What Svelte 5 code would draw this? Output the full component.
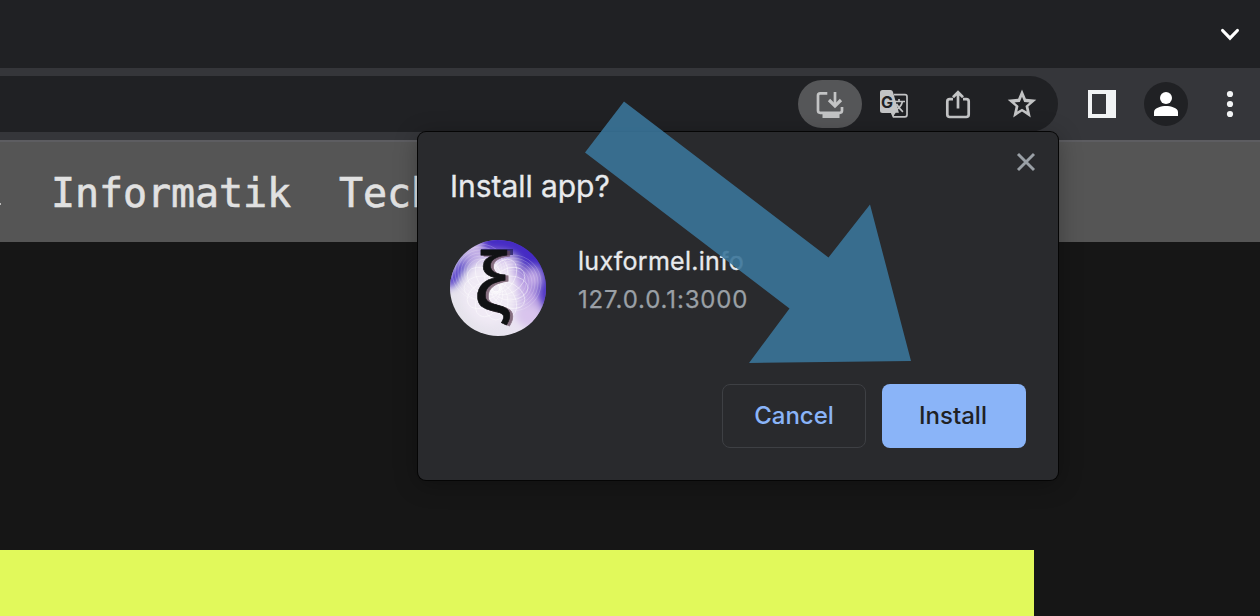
<script>
  const navItems = ['Informatik', 'Technik'];
  const rings = Array.from({ length: 12 }, (_, i) => i * 30);
  const arcs = [13, 16, 19, 22, 25, 28];
</script>

<div class="window">
  <div class="tabs">
    <svg class="chevron" width="20" height="14" viewBox="0 0 20 14"><path d="M2.600 2.500 10 10.200l7.400-7.700" /></svg>
  </div>

  <div class="toolbar">
    <div class="address">
      <div class="pill">
        <svg width="32" height="32" viewBox="0 0 32 32">
          <path class="line" d="M13.300 5.300H6.200Q4 5.300 4 7.500v15.100Q4 24.800 6.200 24.800h19.600q2.200 0 2.200-2.200V19" />
          <path class="line" d="M21 4v13" />
          <path class="arrowhead" d="m15 12 6 6 6-6" />
          <path class="solid" d="M7.500 24.500h17V30h-17z" transform="translate(1)" />
        </svg>
      </div>
      <svg width="32" height="32" viewBox="0 0 32 32">
        <path class="thin" d="M16 6.700h11q2 0 2 2v18.100q0 2-2 2H15.500l-1.800-4" />
        <path class="solid" d="M4.500 2h8q1.900 0 2.400 1.800l6 20.900h-3.200l-2.800 4-1.200-3.700H4.500Q2 25 2 22.500v-18Q2 2 4.500 2z" />
        <text class="g" x="3" y="19.700">G</text>
        <path class="thin" d="M16.500 13.500H27M21 11v2.500M24.500 13.500c-1 4-3.800 7-7.400 8.900M18.500 16c1.600 3.200 3.700 5.400 6.400 7.800" />
      </svg>
      <svg width="32" height="32" viewBox="0 0 32 32">
        <path class="line" d="M11 11.200H7.700Q5.300 11.200 5.300 13.600v13q0 2.400 2.400 2.400h16.600q2.400 0 2.400-2.400v-13q0-2.400-2.400-2.400H21M16 20.500V5M11 9.200l5-5 5 5" />
      </svg>
      <svg width="32" height="32" viewBox="0 0 32 32">
        <path class="solid" fill-rule="evenodd" d="m16 1.600 3.900 9.200 10.400.9-7.900 6.800 2.400 10.900-8.800-5.800-8.800 5.800 2.400-10.900-7.900-6.800 10.400-.9zm0 7.200-2.200 5.100-5.300.5 4 3.500-1.200 5.700 4.700-2.900 4.700 2.900-1.200-5.700 4-3.500-5.300-.5z" />
      </svg>
    </div>
    <svg class="panel" width="28" height="28" viewBox="0 0 28 28"><path fill="#f1f3f4" fill-rule="evenodd" d="M0 0h28v28H0zM4 4v20h14V4z" /></svg>
    <div class="avatar">
      <svg width="28" height="28" viewBox="0 0 28 28"><circle cx="14" cy="8" r="6" fill="#fff" /><path fill="#fff" d="M2 26v-4c0-4.200 7.600-6 12-6s12 1.800 12 6v4z" /></svg>
    </div>
    <svg class="menu" width="8" height="28" viewBox="0 0 8 28"><circle cx="4" cy="4" r="3.100" /><circle cx="4" cy="14" r="3.100" /><circle cx="4" cy="24" r="3.100" /></svg>
  </div>

  <nav>
    <span class="dot"></span>
    {#each navItems as item}<span>{item}</span>{/each}
  </nav>

  <main><div class="card"></div></main>

  <section class="dialog">
    <header>
      <h1>Install app?</h1>
      <svg class="close" width="20" height="20" viewBox="0 0 20 20"><path d="m2 2 16 16M18 2 2 18" /></svg>
    </header>
    <div class="app">
      <svg width="96" height="96" viewBox="0 0 96 96" overflow="visible">
        <defs>
          <clipPath id="disc"><circle cx="48" cy="48" r="48" /></clipPath>
          <linearGradient id="base" x1="0" y1="1" x2="1" y2="0.1">
            <stop offset="0" stop-color="#e3e3e8" /><stop offset=".45" stop-color="#eae4f2" />
            <stop offset=".68" stop-color="#bda2e4" /><stop offset=".88" stop-color="#4630b8" />
          </linearGradient>
          <filter id="soft" x="-50%" y="-50%" width="200%" height="200%"><feGaussianBlur stdDeviation="4" /></filter>
        </defs>
        <g clip-path="url(#disc)">
          <rect width="96" height="96" fill="url(#base)" />
          <g filter="url(#soft)">
            <path fill="#4429c4" d="M30-10h70v52L76 26 60 10 34 10zM-8 46 16 12 20 24 6 46zM90 40h12v36L92 68z" />
            <ellipse cx="24" cy="19" rx="9" ry="8" fill="#b5a0e2" />
            <ellipse cx="83" cy="38" rx="8" ry="10" fill="#c6ace8" />
            <ellipse cx="80" cy="76" rx="13" ry="10" fill="#d9c4ed" />
            <ellipse cx="40" cy="52" rx="28" ry="33" fill="#f0eaf5" />
            <ellipse cx="58" cy="25" rx="9" ry="8" fill="#e4d8f2" />
          </g>
          {#each rings as angle}
            <ellipse cx="60" cy="48" rx="18" ry="12" transform="rotate({angle} 46 48)" fill="none" stroke="#fff" stroke-opacity=".55" stroke-width=".8" />
          {/each}
          {#each arcs as r}
            <circle cx="63" cy="43" {r} fill="none" stroke="#fff" stroke-opacity=".3" stroke-width=".7" />
            <circle cx="30" cy="32" {r} fill="none" stroke="#fff" stroke-opacity=".3" stroke-width=".7" />
          {/each}
          <rect x="31" y="9" width="32" height="6" fill="#292365" opacity=".8" />
        </g>
        <text class="xi" x="24" y="71">ξ</text>
      </svg>
      <div class="about"><strong>luxformel.info</strong><span>127.0.0.1:3000</span></div>
    </div>
    <footer>
      <button class="cancel">Cancel</button>
      <button class="install">Install</button>
    </footer>
  </section>

  <svg class="arrow" width="1260" height="616" viewBox="0 0 1260 616">
    <path d="M624 101.500 828.500 257.500 870 204.500 911 361 749 363 789.500 308.500 585 152.500z" />
  </svg>
</div>

<style>
  :global(body) { margin: 0; background: #161616; }
  .window { position: relative; width: 1260px; height: 616px; overflow: hidden; background: #161616; font-family: Inter, sans-serif; }
  svg { display: block; flex: none; }
  .tabs { height: 68px; background: #202124; display: flex; justify-content: flex-end; box-sizing: border-box; padding: 28px 20px 0 0; }
  .chevron path { fill: none; stroke: #fff; stroke-width: 3.2; stroke-linecap: round; }
  .toolbar { height: 74px; box-sizing: border-box; background: #35363a; border-bottom: 2px solid #5d5d61; display: flex; align-items: center; }
  .address { width: 1058px; height: 56px; box-sizing: border-box; border-radius: 0 28px 28px 0; background: #202124; display: flex; align-items: center; justify-content: flex-end; gap: 32px; padding-right: 20px; }
  .pill { width: 64px; height: 48px; border-radius: 24px; background: #555658; display: flex; align-items: center; justify-content: center; margin-right: -16px; }
  .line, .thin, .arrowhead { fill: none; stroke: #c3c4c5; stroke-width: 2.7; }
  .arrowhead { stroke-width: 3.2; }
  .thin { stroke-width: 1.7; }
  .solid { fill: #c3c4c5; }
  .g { font: 700 16px Inter, sans-serif; fill: #202124; }
  .panel { margin-left: 30px; }
  .avatar { width: 44px; height: 44px; border-radius: 50%; background: #202124; margin-left: 28px; display: flex; align-items: center; justify-content: center; }
  .menu { margin-left: 38px; fill: #f1f3f4; }
  nav { height: 100px; background: #555; display: flex; align-items: center; gap: 48px; font: 40px/50px "DejaVu Sans Mono", monospace; letter-spacing: -.08px; color: #e1e1e1; -webkit-text-stroke: .6px #e1e1e1; }
  .dot { width: 1px; height: 2px; margin-top: 24px; margin-right: 2px; background: #bbb; }
  nav span + span { margin-top: 2px; }
  main { padding-top: 308px; }
  .card { width: 1034px; height: 66px; background: #e1f95b; }
  .dialog { position: absolute; left: 418px; top: 132px; width: 640px; height: 348px; box-sizing: border-box; padding: 20px 32px 32px; border-radius: 8px; background: #292a2d; box-shadow: 0 0 0 1px #050505, 0 4px 24px rgba(0,0,0,.3); display: flex; flex-direction: column; }
  header { display: flex; justify-content: space-between; height: 88px; margin-right: -10px; }
  h1 { margin: 14px 0 0; font-size: 30px; line-height: 40px; font-weight: 400; letter-spacing: -.05px; color: #e8eaed; -webkit-text-stroke: .3px #e8eaed; }
  .close { margin-right: 10px; position: relative; left: 10px; }
  .close path { stroke: #9aa0a6; stroke-width: 2.9; }
  .app { display: flex; gap: 32px; }
  .about { display: flex; flex-direction: column; font-size: 25px; line-height: 38px; margin-top: 2px; color: #e8eaed; }
  .about strong { font-weight: 400; letter-spacing: .27px; -webkit-text-stroke: .3px #e8eaed; }
  .about span { color: #9aa0a6; font-size: 24px; letter-spacing: .85px; margin-top: 1px; -webkit-text-stroke: .25px #9aa0a6; }
  .xi { font: 84px "Liberation Sans", sans-serif; fill: #111214; stroke: #111214; stroke-width: .6; filter: drop-shadow(3px 1px 0 rgba(99,70,88,.75)); }
  footer { display: flex; justify-content: flex-end; gap: 16px; margin-top: auto; }
  button { width: 144px; height: 64px; border: 0; border-radius: 8px; font: 500 24px Inter, sans-serif; padding: 0 0 2px; }
  .cancel { background: #292a2d; border: 1px solid #3e4044; color: #8ab4f8; }
  .install { background: #8ab4f8; color: #202124; padding-right: 2px; }
  .arrow { position: absolute; inset: 0; pointer-events: none; }
  .arrow path { fill: #3a7499; opacity: .9; }
</style>
